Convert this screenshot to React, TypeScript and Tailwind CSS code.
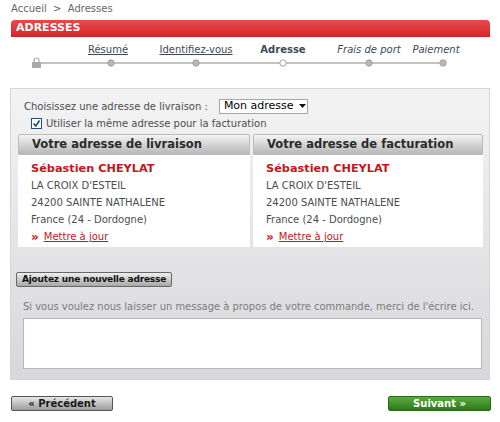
const font = "font-['DejaVu_Sans','Verdana',sans-serif]";

const steps = [
  { label: 'Résumé', cls: 'underline' },
  { label: 'Identifiez-vous', cls: 'underline' },
  { label: 'Adresse', cls: 'font-bold' },
  { label: 'Frais de port', cls: 'italic' },
  { label: 'Paiement', cls: 'italic' },
];

function Steps() {
  // dot centres, relative to the page
  const dots = [111, 196, 283, 369, 443];
  return (
    <div className="h-[51px] text-[10px] text-[#3d4a57]">
      <div className="flex h-[19px] items-end">
        <div className="ml-[58px] flex w-[80px] justify-center whitespace-nowrap leading-[12px]">
          <span className={steps[0].cls}>{steps[0].label}</span>
        </div>
        <div className="ml-[8px] flex w-[80px] justify-center whitespace-nowrap leading-[12px]">
          <span className={steps[1].cls}>{steps[1].label}</span>
        </div>
        <div className="ml-[7px] flex w-[80px] justify-center whitespace-nowrap leading-[12px]">
          <span className={steps[2].cls}>{steps[2].label}</span>
        </div>
        <div className="ml-[6px] flex w-[80px] justify-center whitespace-nowrap leading-[12px]">
          <span className={steps[3].cls}>{steps[3].label}</span>
        </div>
        <div className="ml-[-13px] flex w-[80px] justify-center whitespace-nowrap leading-[12px]">
          <span className={steps[4].cls}>{steps[4].label}</span>
        </div>
      </div>
      <svg className="block" width="480" height="14">
        <line x1="27" y1="7" x2="432" y2="7" stroke="#c2c2c2" strokeWidth="2" />
        <rect x="22" y="6" width="9" height="6" rx="1" fill="#a9a9a9" />
        <path d="M24 6 V4.5 a2.5 2.5 0 0 1 5 0 V6" fill="none" stroke="#a9a9a9" strokeWidth="1.2" />
        {dots.map((d, i) => (
          <circle key={d} cx={d - 10} cy="7" r="3.2" fill={i === 2 ? '#fff' : '#b8b8b8'} stroke="#a3a3a3" strokeWidth="1" />
        ))}
      </svg>
    </div>
  );
}

function AddressCard({ title, wide }: { title: string; wide?: boolean }) {
  return (
    <div className={wide ? 'w-[232px]' : 'w-[230px]'}>
      <div className="flex h-[21px] items-center rounded-t-[2px] border border-[#bcbcbc] bg-gradient-to-b from-[#f3f3f3] to-[#b7b7b9] pl-[13px] text-[11.5px] font-bold text-[#2b2b2b]">
        {title}
      </div>
      <div className="h-[92px] bg-white pl-[13px] pt-[5px] text-[10px] leading-[17px] text-[#4d4d4d]">
        <div className="text-[11.3px] font-bold text-[#c4161c]">Sébastien CHEYLAT</div>
        <div>LA CROIX D'ESTEIL</div>
        <div>24200 SAINTE NATHALENE</div>
        <div>France (24 - Dordogne)</div>
        <div className="flex items-center">
          <span className="mr-[5px] text-[12px] font-bold leading-none text-[#c4161c]">»</span>
          <a className="text-[#c4161c] underline">Mettre à jour</a>
        </div>
      </div>
    </div>
  );
}

export default function App() {
  return (
    <div className={`${font} h-[422px] w-[500px] bg-white px-[10px]`}>
      <div className="h-[18px] whitespace-pre pl-[1px] text-[10px] leading-[18px] text-[#666]">Accueil  &gt;  Adresses</div>
      <div className="mt-[2px] ml-[1px] flex h-[17px] items-center rounded-t-[4px] bg-gradient-to-b from-[#e8494c] to-[#d42227] pl-[5px] text-[11px] font-bold text-white">
        ADRESSES
      </div>
      <Steps />
      <div className="flex h-[292px] flex-col border border-[#d6d6d8] bg-gradient-to-b from-[#f3f3f4] to-[#d8d8dc]">
        <div className="mt-[10px] flex h-[14px] items-center text-[10px] text-[#4d4d4d]">
          <span className="ml-[13px]">Choisissez une adresse de livraison :</span>
          <div className="ml-[11px] flex h-[15px] w-[89px] items-center border border-[#a5a5a5] bg-white pl-[4px] text-[11px] text-black">
            Mon adresse
            <svg className="ml-[5px]" width="7" height="4">
              <path d="M0 0 H7 L3.5 4 Z" fill="#111" />
            </svg>
          </div>
        </div>
        <div className="mt-[5px] flex h-[11px] items-center text-[10px] text-[#4d4d4d]">
          <span className="ml-[20px] flex h-[11px] w-[11px] items-center justify-center border border-[#1c4f7f] bg-white">
            <svg width="9" height="9">
              <path d="M1.5 4.5 L3.8 7 L7.5 1.5" fill="none" stroke="#22447a" strokeWidth="1.6" />
            </svg>
          </span>
          <span className="ml-[4px]">Utiliser la même adresse pour la facturation</span>
        </div>
        <div className="mt-[5px] ml-[7px] flex gap-[3px]">
          <AddressCard title="Votre adresse de livraison" wide />
          <AddressCard title="Votre adresse de facturation" />
        </div>
        <button className="mt-[25px] ml-[5px] h-[15px] w-[156px] whitespace-nowrap rounded-[2px] border border-[#666] bg-gradient-to-b from-[#efefef] to-[#a8a8aa] text-[9px] font-bold leading-none tracking-[-0.2px] text-[#111]">
          Ajoutez une nouvelle adresse
        </button>
        <div className="mt-[13px] h-[14px] whitespace-nowrap pl-[12px] text-[9.95px] leading-[14px] text-[#7a7a7a]">
          Si vous voulez nous laisser un message à propos de votre commande, merci de l'écrire ici.
        </div>
        <div className="mt-[4px] ml-[12px] h-[51px] w-[459px] border border-[#b7b7b7] bg-white" />
      </div>
      <div className="mt-[16px] flex justify-between">
        <button className="ml-[1px] h-[15px] w-[102px] rounded-[2px] border border-[#555] bg-gradient-to-b from-[#e8e8e8] to-[#9b9b9d] text-[10px] font-bold leading-none text-[#1a1a1a]">
          « Précédent
        </button>
        <button className="mr-[-1px] h-[15px] w-[103px] rounded-[2px] border border-[#2b6a17] bg-gradient-to-b from-[#5aac3d] to-[#2b7a18] text-[10px] font-bold leading-none text-white">
          Suivant »
        </button>
      </div>
    </div>
  );
}
